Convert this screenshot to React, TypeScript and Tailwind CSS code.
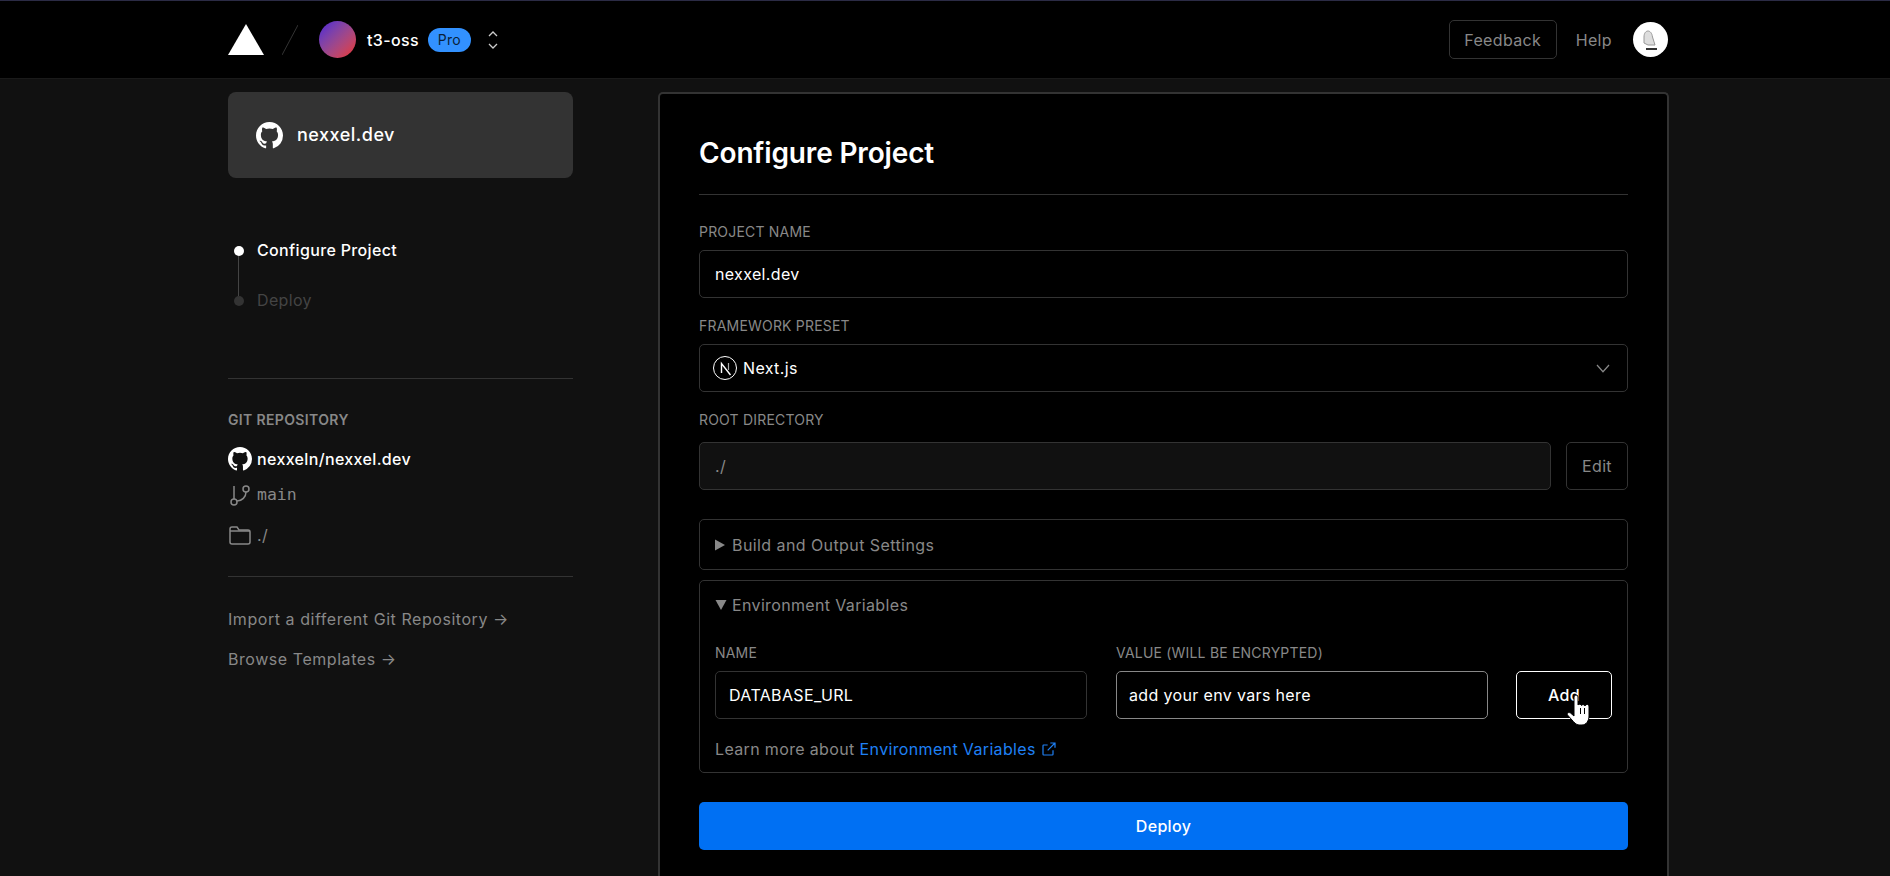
import React from 'react';

const font = { fontFamily: 'Inter, "Liberation Sans", sans-serif' };

const GitHubIcon = ({ size }: { size: number }) => (
  <svg width={size} height={size} viewBox="0 0 24 24" fill="#fff" className="shrink-0">
    <path d="M12 0C5.37 0 0 5.37 0 12c0 5.3 3.44 9.8 8.2 11.39.6.11.82-.26.82-.58v-2.03c-3.34.72-4.04-1.61-4.04-1.61-.55-1.39-1.34-1.76-1.34-1.76-1.09-.75.08-.73.08-.73 1.2.08 1.84 1.24 1.84 1.24 1.07 1.83 2.81 1.3 3.49 1 .11-.78.42-1.31.76-1.61-2.67-.3-5.47-1.33-5.47-5.93 0-1.31.47-2.38 1.24-3.22-.14-.3-.54-1.52.1-3.18 0 0 1-.32 3.3 1.23a11.5 11.5 0 0 1 6 0c2.28-1.55 3.29-1.23 3.29-1.23.64 1.66.24 2.88.12 3.18a4.65 4.65 0 0 1 1.23 3.22c0 4.61-2.8 5.63-5.48 5.92.42.36.81 1.1.81 2.22v3.29c0 .32.22.7.82.58A12 12 0 0 0 24 12c0-6.63-5.37-12-12-12z" />
  </svg>
);

const Label = ({ children }: { children: React.ReactNode }) => (
  <div className="text-sm leading-[18px] text-[#888] uppercase tracking-[0.2px]">{children}</div>
);

const Sidebar = () => (
  <aside className="w-[345px] shrink-0 pt-[13px]">
    <div className="h-[86px] rounded-lg bg-[#333] flex items-center pl-7 gap-[14px]">
      <GitHubIcon size={27} />
      <span className="text-lg font-medium text-white tracking-[0.5px]">nexxel.dev</span>
    </div>

    <div className="mt-[68px] flex">
      <div className="w-[29px] pl-1.5 flex flex-col items-start">
        <span className="w-2.5 h-2.5 rounded-full bg-white" />
        <span className="ml-1 w-px h-[40px] bg-[#444]" />
        <span className="w-2.5 h-2.5 rounded-full bg-[#333]" />
      </div>
      <div className="-mt-2">
        <div className="text-base leading-6 font-medium text-white">Configure Project</div>
        <div className="mt-[26px] text-base leading-6 text-[#444]">Deploy</div>
      </div>
    </div>

    <div className="mt-[66px] border-t border-[#333] pt-[32px] pb-[29px]">
      <div className="text-sm leading-[18px] font-semibold text-[#888] uppercase">Git Repository</div>
      <div className="mt-[18px] flex items-center gap-[5px] h-6">
        <GitHubIcon size={24} />
        <span className="text-base font-medium text-white">nexxeln/nexxel.dev</span>
      </div>
      <div className="mt-[12px] flex items-center gap-[5px] h-6 text-[#888]">
        <svg width="24" height="24" viewBox="0 0 24 24" fill="none" stroke="#888" strokeWidth="1.5" className="shrink-0">
          <path d="M6 3v13" />
          <circle cx="6" cy="19" r="3" />
          <circle cx="18" cy="6" r="3" />
          <path d="M18 9a9 9 0 0 1-9 9" />
        </svg>
        <span className="text-base tracking-normal" style={{ fontFamily: '"DejaVu Sans Mono", monospace', fontSize: 16.5 }}>main</span>
      </div>
      <div className="mt-[16px] flex items-center gap-[5px] h-6 text-[#888]">
        <svg width="24" height="24" viewBox="0 0 24 24" fill="none" stroke="#888" strokeWidth="1.5" className="shrink-0">
          <path d="M2 6a2 2 0 0 1 2-2h5l2 3h9a2 2 0 0 1 2 2v10a2 2 0 0 1-2 2H4a2 2 0 0 1-2-2z" />
          <path d="M2 8h20" />
        </svg>
        <span className="text-base">./</span>
      </div>
    </div>

    <div className="border-t border-[#333] pt-[30px] tracking-[0.55px]">
      <div className="text-base leading-6 text-[#888]">Import a different Git Repository →</div>
      <div className="mt-4 text-base leading-6 text-[#888]">Browse Templates →</div>
    </div>
  </aside>
);

const Field = ({ children, className }: { children: React.ReactNode; className: string }) => (
  <div className={`rounded-[5px] border flex items-center text-base ${className}`}>{children}</div>
);

const MainCard = () => (
  <section className="w-[1011px] shrink-0 mt-[13px] rounded-t-[5px] border-2 border-b-0 border-[#333] bg-black px-[39px] pt-[39px] h-[900px]">
    <h1 className="text-[28px] leading-[40px] font-semibold text-white tracking-[-0.15px]">Configure Project</h1>
    <div className="mt-[21px] border-t border-[#333]" />

    <div className="mt-[28px]">
      <Label>Project Name</Label>
    </div>
    <Field className="mt-[9px] h-12 border-[#333] px-[15px] text-white">nexxel.dev</Field>

    <div className="mt-[19px]">
      <Label>Framework Preset</Label>
    </div>
    <Field className="mt-[9px] h-12 border-[#333] pl-[13px] pr-[15px] text-white">
      <svg width="24" height="24" viewBox="0 0 24 24" fill="none" className="shrink-0">
        <circle cx="12" cy="12" r="11.5" stroke="#fff" strokeWidth="1" />
        <path d="M8.5 17V7.5L17.5 19" stroke="#fff" strokeWidth="1.4" />
        <path d="M15.5 7v7" stroke="#aaa" strokeWidth="1.2" />
      </svg>
      <span className="ml-[6px] flex-1">Next.js</span>
      <svg width="18" height="18" viewBox="0 0 24 24" fill="none" stroke="#888" strokeWidth="1.6">
        <path d="M4 8l8 9 8-9" />
      </svg>
    </Field>

    <div className="mt-[19px]">
      <Label>Root Directory</Label>
    </div>
    <div className="mt-[13px] flex gap-[15px]">
      <Field className="flex-1 h-12 border-[#333] bg-[#111] px-[15px] text-[#888]">./</Field>
      <Field className="w-[62px] h-12 border-[#333] justify-center text-[#888]">Edit</Field>
    </div>

    <div className="mt-[29px] h-[51px] rounded-[5px] border border-[#333] flex items-center pl-[15px] text-base text-[#888] tracking-[0.42px]">
      <svg width="10" height="12" viewBox="0 0 10 12" fill="#888" className="mr-[7px]">
        <path d="M0 0.5l10 5.5-10 5.5z" />
      </svg>
      Build and Output Settings
    </div>

    <div className="mt-[10px] h-[193px] rounded-[5px] border border-[#333] px-[15px]">
      <div className="h-[48px] flex items-center text-base text-[#888]">
        <svg width="12" height="10" viewBox="0 0 12 10" fill="#888" className="mr-[5px]">
          <path d="M0.5 0h11l-5.5 10z" />
        </svg>
        Environment Variables
      </div>
      <div className="mt-[15px] flex">
        <div className="w-[372px]">
          <Label>Name</Label>
          <Field className="mt-[9px] h-12 border-[#333] pl-[13px] pb-px text-white">DATABASE_URL</Field>
        </div>
        <div className="w-[372px] ml-[29px]">
          <Label>Value (will be encrypted)</Label>
          <Field className="mt-[9px] h-12 border-[#888] pl-[12px] pb-px text-white">add your env vars here</Field>
        </div>
        <div className="ml-[28px] mt-[27px] relative">
          <Field className="w-[96px] h-12 border-white justify-center text-white font-medium">Add</Field>
          <svg width="24" height="32" viewBox="0 0 24 32" className="absolute left-[50px] top-[23px]">
            <path
              d="M8 3a2 2 0 0 1 4 0v8a2 2 0 0 1 3.500.5a2 2 0 0 1 3.500.5a2 2 0 0 1 4 1v9c0 5-3 9-7 9h-3c-3 0-5-3-7-5l-4.500-5c-1-2 1-3 3-2l3.500 3z"
              fill="#fff"
              stroke="#000"
              strokeWidth="1"
            />
            <path d="M14.500 14v6M18.500 14v6" stroke="#000" strokeWidth="1" />
          </svg>
        </div>
      </div>
      <div className="mt-[18px] flex items-center text-base text-[#888]">
        Learn more about<span className="ml-[5px] text-[#1f80f5]">Environment Variables</span>
        <svg width="16" height="16" viewBox="0 0 24 24" fill="none" stroke="#1f80f5" strokeWidth="1.800" className="ml-[5px]">
          <path d="M18 14v6a1 1 0 0 1-1 1H4a1 1 0 0 1-1-1V7a1 1 0 0 1 1-1h6" />
          <path d="M14 3h7v7M21 3L10 14" />
        </svg>
      </div>
    </div>

    <div className="mt-[29px] h-12 rounded-[5px] bg-[#0070f3] flex items-center justify-center text-base font-medium text-white">
      Deploy
    </div>
  </section>
);

export default function App() {
  return (
    <div className="h-[876px] overflow-hidden bg-[#111] tracking-[0.35px]" style={font}>
      <header className="h-[79px] bg-black border-t border-t-[#2b2b45] border-b border-b-[#1a1a1a] pl-[228px] pr-[222px] flex items-center">
        <svg width="36" height="31" viewBox="0 0 36 31" fill="#fff" className="shrink-0">
          <path d="M18 0l18 31H0z" />
        </svg>
        <svg width="16" height="30" viewBox="0 0 16 30" fill="none" stroke="#333" strokeWidth="1" className="ml-[18px] shrink-0">
          <path d="M16 0L0 30" />
        </svg>
        <div className="ml-[21px] w-[37px] h-[37px] rounded-full bg-gradient-to-br from-[#4f0fd8] to-[#ee2b1c] shrink-0" />
        <span className="ml-[11px] text-base font-medium text-white">t3-oss</span>
        <span className="ml-[9px] h-6 w-[43px] rounded-full bg-[#3291ff] flex items-center justify-center text-sm text-[#0a1f3a]">Pro</span>
        <svg width="12" height="20" viewBox="0 0 12 20" fill="none" stroke="#ccc" strokeWidth="1.3" className="ml-4 shrink-0">
          <path d="M2 6l4-4 4 4M2 14l4 4 4-4" />
        </svg>
        <div className="flex-1" />
        <div className="w-[108px] h-[39px] rounded-[5px] border border-[#333] flex items-center justify-center text-base text-[#888]">Feedback</div>
        <span className="ml-[19px] text-base text-[#888]">Help</span>
        <div className="ml-[21px] w-[35px] h-[35px] rounded-full bg-white flex items-center justify-center shrink-0">
          <svg width="18" height="24" viewBox="0 0 18 24" fill="none" stroke="#999" strokeWidth="1">
            <path d="M2 9c0-4 2-6 4-6s4 2 4.500 6l2.500 8H6l-4-2z" fill="#ddd" />
            <path d="M4 21h11" stroke="#333" strokeWidth="2" />
          </svg>
        </div>
      </header>
      <div className="pl-[228px] flex gap-[85px]">
        <Sidebar />
        <MainCard />
      </div>
    </div>
  );
}
